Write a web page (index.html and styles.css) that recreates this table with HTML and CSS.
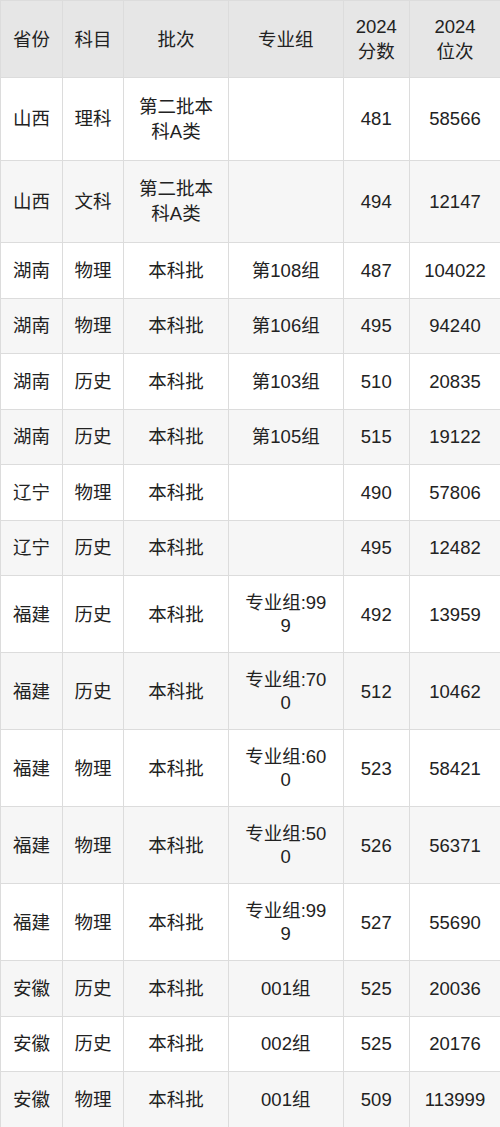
FILE: index.html
```html
<!DOCTYPE html>
<html lang="zh">
<head>
<meta charset="utf-8">
<title>分数线</title>
<link rel="stylesheet" href="styles.css">
</head>
<body>
<table class="score-table">
  <colgroup>
    <col class="c1"><col class="c2"><col class="c3"><col class="c4"><col class="c5"><col class="c6">
  </colgroup>
  <thead>
    <tr class="head">
      <th>省份</th><th>科目</th><th>批次</th><th>专业组</th><th>2024<br>分数</th><th>2024<br>位次</th>
    </tr>
  </thead>
  <tbody>
    <tr class="tall"><td>山西</td><td>理科</td><td class="wrap">第二批本科A类</td><td></td><td>481</td><td>58566</td></tr>
    <tr class="tall"><td>山西</td><td>文科</td><td class="wrap">第二批本科A类</td><td></td><td>494</td><td>12147</td></tr>
    <tr class="single"><td>湖南</td><td>物理</td><td>本科批</td><td>第108组</td><td>487</td><td>104022</td></tr>
    <tr class="single"><td>湖南</td><td>物理</td><td>本科批</td><td>第106组</td><td>495</td><td>94240</td></tr>
    <tr class="single"><td>湖南</td><td>历史</td><td>本科批</td><td>第103组</td><td>510</td><td>20835</td></tr>
    <tr class="single"><td>湖南</td><td>历史</td><td>本科批</td><td>第105组</td><td>515</td><td>19122</td></tr>
    <tr class="single"><td>辽宁</td><td>物理</td><td>本科批</td><td></td><td>490</td><td>57806</td></tr>
    <tr class="single"><td>辽宁</td><td>历史</td><td>本科批</td><td></td><td>495</td><td>12482</td></tr>
    <tr class="double"><td>福建</td><td>历史</td><td>本科批</td><td class="wrap">专业组:999</td><td>492</td><td>13959</td></tr>
    <tr class="double"><td>福建</td><td>历史</td><td>本科批</td><td class="wrap">专业组:700</td><td>512</td><td>10462</td></tr>
    <tr class="double"><td>福建</td><td>物理</td><td>本科批</td><td class="wrap">专业组:600</td><td>523</td><td>58421</td></tr>
    <tr class="double"><td>福建</td><td>物理</td><td>本科批</td><td class="wrap">专业组:500</td><td>526</td><td>56371</td></tr>
    <tr class="double"><td>福建</td><td>物理</td><td>本科批</td><td class="wrap">专业组:999</td><td>527</td><td>55690</td></tr>
    <tr class="single"><td>安徽</td><td>历史</td><td>本科批</td><td>001组</td><td>525</td><td>20036</td></tr>
    <tr class="single"><td>安徽</td><td>历史</td><td>本科批</td><td>002组</td><td>525</td><td>20176</td></tr>
    <tr class="single"><td>安徽</td><td>物理</td><td>本科批</td><td>001组</td><td>509</td><td>113999</td></tr>
  </tbody>
</table>
</body>
</html>
```

FILE: styles.css
```css
html, body {
  margin: 0;
  padding: 0;
  background: #ffffff;
}

.score-table {
  width: 500px;
  table-layout: fixed;
  border-collapse: collapse;
  font-family: "Liberation Sans", "Noto Sans CJK SC", sans-serif;
  font-size: 18.5px;
  color: #222222;
}

.c1 { width: 62px; }
.c2 { width: 61px; }
.c3 { width: 105px; }
.c4 { width: 114.5px; }
.c5 { width: 66.5px; }
.c6 { width: 91px; }

.score-table th,
.score-table td {
  border: 1px solid #dcdcdc;
  padding: 0 6px;
  text-align: center;
  vertical-align: middle;
  line-height: 23px;
  font-weight: normal;
}

.score-table td.wrap {
  word-break: break-all;
  padding: 0 13px;
}

.score-table tr.tall td.wrap {
  line-height: 25px;
  padding: 0 10px;
}

.head th {
  background: #e6e6e6;
  height: 76px;
  line-height: 25px;
}

tbody tr:nth-child(even) td {
  background: #f6f6f6;
}

tr.tall td { height: 81.5px; }
tr.single td { height: 54.5px; }
tr.double td { height: 76px; }
```
